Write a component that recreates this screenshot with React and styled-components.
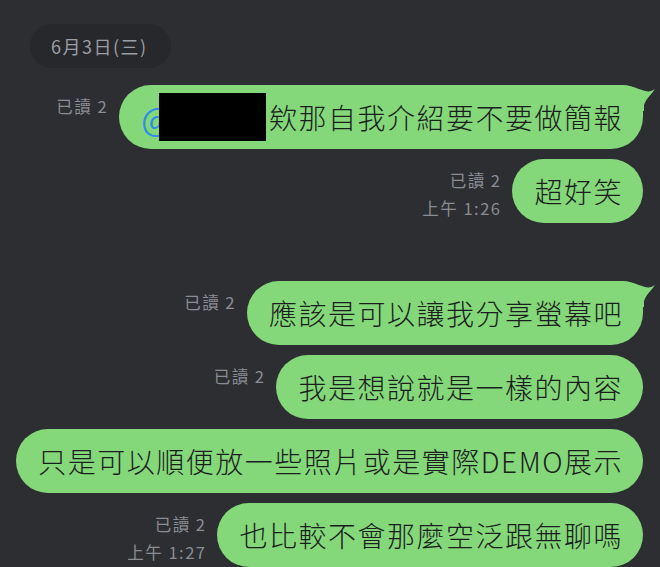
import styled, { createGlobalStyle } from "styled-components";

const Global = createGlobalStyle`
  html, body {
    margin: 0;
    padding: 0;
    background: #2d2e32;
  }
  body {
    font-family: "Noto Sans CJK TC", "Noto Sans", sans-serif;
  }
`;

const Chat = styled.div`
  width: 660px;
  height: 567px;
  overflow: hidden;
  box-sizing: border-box;
  padding: 24px 17px 0 12px;
  display: flex;
  flex-direction: column;
  & > * {
    flex-shrink: 0;
  }
`;

const DatePill = styled.div`
  align-self: flex-start;
  margin-left: 18px;
  height: 44px;
  padding: 0 23px 0 21px;
  border-radius: 22px;
  background: #27282b;
  color: #9b9ea5;
  font-size: 18px;
  letter-spacing: 1.5px;
  display: flex;
  align-items: center;
  margin-bottom: 17px;
`;

const Row = styled.div`
  display: flex;
  justify-content: flex-end;
  align-items: flex-start;
  gap: 11px;
  margin-top: ${(p) => (p.$groupStart ? "58px" : "10px")};
  &:nth-child(2) {
    margin-top: 0;
  }
`;

const Meta = styled.div`
  display: flex;
  flex-direction: column;
  align-items: flex-end;
  padding-top: 7px;
  color: #8a8d94;
  font-size: 16.5px;
  line-height: 28px;
  letter-spacing: 1.5px;
  white-space: nowrap;
`;

const Bubble = styled.div`
  position: relative;
  box-sizing: border-box;
  height: 64px;
  display: flex;
  align-items: center;
  background: #84d87a;
  color: #1c1d1f;
  font-size: 28px;
  font-weight: 300;
  line-height: 36px;
  letter-spacing: 1.5px;
  padding: 0 20px 0 22px;
  border-radius: 32px;
  border-top-right-radius: ${(p) => (p.$tail ? "20px" : "32px")};
  white-space: nowrap;
`;

const Tail = styled.svg`
  position: absolute;
  top: 0;
  right: -13px;
  width: 36px;
  height: 26px;
`;

const Mention = styled.span`
  color: #2f8de6;
  font-size: 32px;
  font-weight: 400;
`;

const Redact = styled.span`
  position: relative;
  display: block;
  width: 107px;
  height: 48px;
  margin: 0 3px 0 -14px;
  background: #000;
`;

const messages = [
  { text: "欸那自我介紹要不要做簡報", read: "已讀 2", tail: true, mention: true },
  { text: "超好笑", read: "已讀 2", time: "上午 1:26" },
  { text: "應該是可以讓我分享螢幕吧", read: "已讀 2", tail: true, groupStart: true },
  { text: "我是想說就是一樣的內容", read: "已讀 2" },
  { text: "只是可以順便放一些照片或是實際DEMO展示" },
  { text: "也比較不會那麼空泛跟無聊嗎", read: "已讀 2", time: "上午 1:27" },
];

export default function App() {
  return (
    <>
      <Global />
      <Chat>
        <DatePill>6月3日(三)</DatePill>
        {messages.map((m, i) => (
          <Row key={i} $groupStart={m.groupStart}>
            {m.read && (
              <Meta>
                <span>{m.read}</span>
                {m.time && <span>{m.time}</span>}
              </Meta>
            )}
            <Bubble $tail={m.tail}>
              {m.mention && (
                <>
                  <Mention>@</Mention>
                  <Redact />
                </>
              )}
              <span>{m.text}</span>
              {m.tail && (
                <Tail viewBox="0 0 36 26">
                  <path
                    d="M0 0 C10 0 16 3 22 5 C27 7 31 7 35 4 C32 9 27 12 24 20 L24 26 L0 26 Z"
                    fill="#84d87a"
                  />
                </Tail>
              )}
            </Bubble>
          </Row>
        ))}
      </Chat>
    </>
  );
}
